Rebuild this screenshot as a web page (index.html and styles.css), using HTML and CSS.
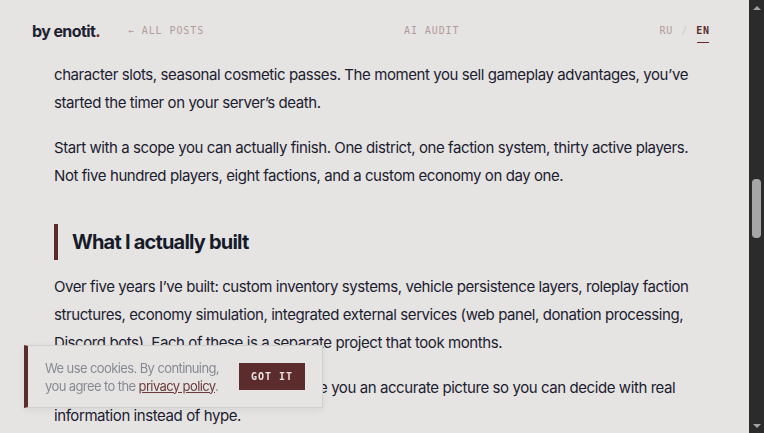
FILE: index.html
```html
<!DOCTYPE html>
<html lang="en">
<head>
<meta charset="utf-8">
<title>What I actually built — by enotit.</title>
<link rel="stylesheet" href="styles.css">
</head>
<body>
<div class="window">
  <div class="viewport">
    <header class="site-header">
      <div class="header-left">
        <a class="logo" href="#">by enotit<span class="logo-dot">.</span></a>
        <a class="nav-link" href="#">← ALL POSTS</a>
      </div>
      <a class="nav-link" href="#">AI AUDIT</a>
      <div class="lang">
        <a class="lang-item" href="#">RU</a>
        <span class="lang-sep">/</span>
        <a class="lang-item active" href="#">EN</a>
      </div>
    </header>
    <main class="article">
      <p>character slots, seasonal cosmetic passes. The moment you sell gameplay advantages, you’ve started the timer on your server’s death.</p>
      <p>Start with a scope you can actually finish. One district, one faction system, thirty active players. Not five hundred players, eight factions, and a custom economy on day one.</p>
      <h2 class="section-title">What I actually built</h2>
      <p>Over five years I’ve built: custom inventory systems, vehicle persistence layers, roleplay faction structures, economy simulation, integrated external services (web panel, donation processing, Discord bots). Each of these is a separate project that took months.</p>
      <p>I’m telling you this not to brag, but to give you an accurate picture so you can decide with real information instead of hype.</p>
    </main>
    <div class="cookie">
      <p class="cookie-text">We use cookies. By continuing, you agree to the <a href="#">privacy policy</a>.</p>
      <button class="cookie-btn">GOT IT</button>
    </div>
  </div>
  <div class="scrollbar">
    <div class="arrow arrow-up"></div>
    <div class="track"><div class="thumb"></div></div>
    <div class="arrow arrow-down"></div>
  </div>
</div>
</body>
</html>
```
FILE: styles.css
```css
* { box-sizing: border-box; }
html, body { margin: 0; padding: 0; }
body {
  background: #e6e4e2;
  font-family: Inter, "Noto Sans", sans-serif;
  color: #1b2030;
  overflow: hidden;
}
a { text-decoration: none; color: inherit; }
.window {
  display: flex;
  height: 433px;
}
.viewport {
  flex: 1;
  height: 433px;
  overflow: hidden;
  background: #e6e4e2;
}
.site-header {
  height: 61px;
  display: flex;
  align-items: center;
  justify-content: space-between;
  padding: 0 39px 0 32px;
}
.header-left {
  display: flex;
  align-items: center;
  gap: 28px;
}
.logo {
  font-weight: 700;
  font-size: 16px;
  letter-spacing: -0.6px;
  color: #1d2231;
}
.logo-dot { color: #7a2a2a; }
.nav-link, .lang {
  font-family: "DejaVu Sans Mono", "Liberation Mono", monospace;
  font-size: 10px;
  letter-spacing: 0.9px;
  color: #b39a9d;
}
.lang { display: flex; gap: 8px; align-items: center; }
.lang-sep { color: #d2c6c6; }
.lang-item.active {
  color: #5c2b2b;
  font-weight: 700;
  position: relative;
}
.lang-item.active::after {
  content: "";
  position: absolute;
  left: 1px; right: 1px;
  bottom: -7px;
  height: 1px;
  background: #6a2a2a;
}
.article {
  width: 641px;
  margin: 0 auto;
  font-size: 15px;
  letter-spacing: -0.42px;
  line-height: 28px;
}
.article p { margin: 0 0 17px; }
.section-title {
  margin: 34px 0 13px;
  border-left: 4px solid #5c2b2b;
  padding-left: 14px;
  font-size: 20px;
  letter-spacing: -0.8px;
  line-height: 36px;
  font-weight: 700;
  color: #161b2a;
}
.cookie {
  position: fixed;
  left: 24px;
  bottom: 25px;
  width: 299px;
  height: 63px;
  display: flex;
  align-items: center;
  gap: 14px;
  padding: 0 17px;
  background: #e6e4e2;
  border: 1px solid #d2d0ce;
  border-left: 4px solid #5c2b2b;
  box-shadow: 0 2px 8px rgba(0,0,0,0.06);
}
.cookie-text {
  flex: 1;
  margin: 0;
  font-size: 13px;
  letter-spacing: -0.6px;
  line-height: 18px;
  color: #878a94;
}
.cookie-text a {
  color: #6b3b3b;
  text-decoration: underline;
}
.cookie-btn {
  flex: none;
  width: 66px;
  height: 27px;
  border: 0;
  background: #5c2c2c;
  color: #ece4e4;
  font-family: "DejaVu Sans Mono", "Liberation Mono", monospace;
  font-weight: 700;
  font-size: 10px;
  letter-spacing: 1px;
  padding: 0;
}
.scrollbar {
  width: 15px;
  flex: none;
  background: #2b2b2b;
  display: flex;
  flex-direction: column;
}
.arrow {
  height: 15px;
  display: flex;
  align-items: center;
  justify-content: center;
}
.arrow::before {
  content: "";
  border-left: 4px solid transparent;
  border-right: 4px solid transparent;
}
.arrow-up::before { border-bottom: 4px solid #a3a3a3; }
.arrow-down::before { border-top: 4px solid #a3a3a3; }
.track { flex: 1; padding: 164px 3px 0; }
.thumb {
  height: 59px;
  background: #a6a6a6;
  border-radius: 4px;
}
```
